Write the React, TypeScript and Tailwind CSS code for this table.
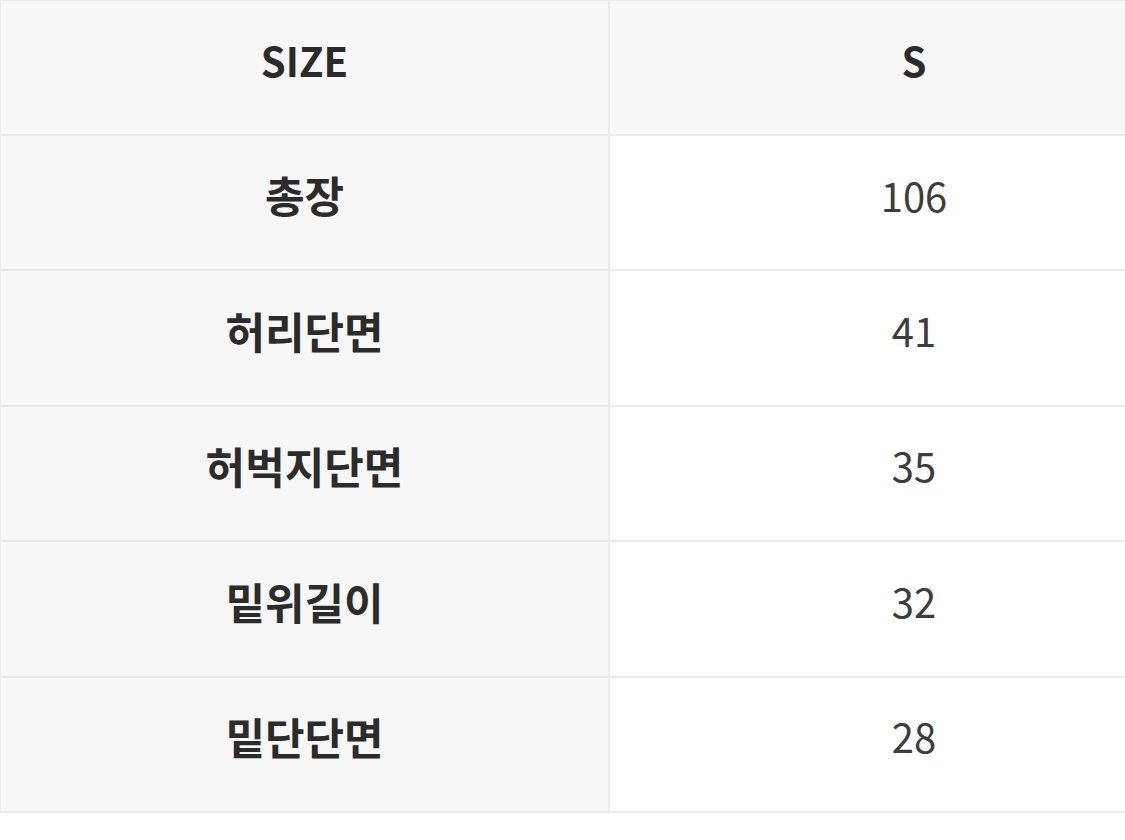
import React from 'react';

const rows = [
  { label: '총장', value: '106' },
  { label: '허리단면', value: '41' },
  { label: '허벅지단면', value: '35' },
  { label: '밑위길이', value: '32' },
  { label: '밑단단면', value: '28' },
];

const font = { fontFamily: '"Noto Sans CJK KR", "Noto Sans", sans-serif' };

export default function App() {
  return (
    <div className="w-[1125px] h-[840px] overflow-hidden bg-white" style={font}>
      <div className="w-[1218px] border-t border-l border-[#ececec]">
        {/* Header */}
        <div className="flex h-[135px] border-b-2 border-[#ebebeb] bg-[#f7f7f7]">
          <div className="w-[609px] flex items-center justify-center border-r-2 border-[#ebebeb] text-[40px] font-bold text-[#2b2b2b] pb-4">
            SIZE
          </div>
          <div className="flex-1 flex items-center justify-center text-[40px] font-bold text-[#2b2b2b] pb-4">
            S
          </div>
        </div>

        {rows.map(row => (
          <div key={row.label} className="flex h-[135.4px] border-b-2 border-[#ebebeb]">
            <div className="w-[609px] flex items-center justify-center bg-[#f7f7f7] border-r-2 border-[#ebebeb] text-[43px] font-bold text-[#2b2b2b] pb-4">
              {row.label}
            </div>
            <div className="flex-1 flex items-center justify-center bg-white text-[40px] text-[#3d3d3d] pb-4">
              {row.value}
            </div>
          </div>
        ))}
      </div>
    </div>
  );
}
